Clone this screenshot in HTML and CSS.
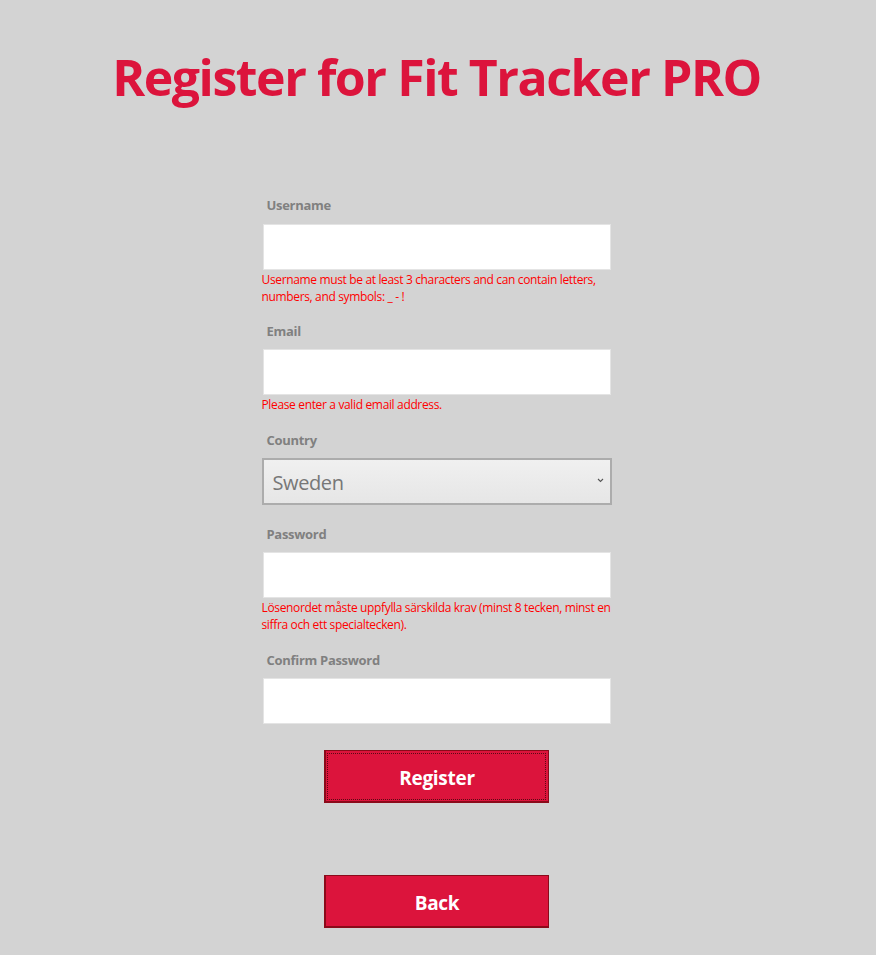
FILE: index.html
```html
<!DOCTYPE html>
<html lang="en">
<head>
<meta charset="utf-8">
<title>Register for Fit Tracker PRO</title>
<link rel="stylesheet" href="styles.css">
</head>
<body>
<h1 class="title">Register for Fit Tracker PRO</h1>
<form class="form">
  <div class="field field-first">
    <label class="label" for="username">Username</label>
    <input class="input" id="username" type="text">
    <div class="error">Username must be at least 3 characters and can contain letters, numbers, and symbols: _ - !</div>
  </div>
  <div class="field">
    <label class="label" for="email">Email</label>
    <input class="input" id="email" type="email">
    <div class="error">Please enter a valid email address.</div>
  </div>
  <div class="field field-select">
    <label class="label" for="country">Country</label>
    <div class="select-wrap">
      <select class="select" id="country">
        <option>Sweden</option>
      </select>
      <svg class="chevron" width="7" height="5" viewBox="0 0 7 5"><path d="M1 1 L3.5 3.5 L6 1" fill="none" stroke="#555" stroke-width="1.1"/></svg>
    </div>
  </div>
  <div class="field">
    <label class="label" for="password">Password</label>
    <input class="input" id="password" type="password">
    <div class="error">Lösenordet måste uppfylla särskilda krav (minst 8 tecken, minst en siffra och ett specialtecken).</div>
  </div>
  <div class="field field-last">
    <label class="label" for="confirm">Confirm Password</label>
    <input class="input" id="confirm" type="password">
  </div>
  <div class="actions">
    <button type="button" class="btn btn-focus">Register</button>
    <button type="button" class="btn btn-back">Back</button>
  </div>
</form>
</body>
</html>
```
FILE: styles.css
```css
html, body {
  margin: 0;
  padding: 0;
}
body {
  background: #d3d3d3;
  font-family: "Open Sans", "Noto Sans", "Liberation Sans", sans-serif;
  padding-right: 3px;
  min-height: 955px;
}
.title {
  margin: 47px 0 0 0;
  text-align: center;
  color: #dc143c;
  font-size: 50px;
  line-height: 60px;
  font-weight: 700;
  letter-spacing: -1.45px;
}
.form {
  width: 350px;
  margin: 89px auto 0 auto;
}
.field {
  margin-bottom: 18px;
}
.field-first .label {
  margin-bottom: 10px;
}
.field-first {
  margin-bottom: 17px;
}
.field-select {
  margin-bottom: 20px;
}
.field-last {
  margin-bottom: 26px;
}
.label {
  display: block;
  font-size: 13px;
  line-height: 18px;
  font-weight: 700;
  color: #808080;
  padding-left: 5px;
  margin-bottom: 9px;
  letter-spacing: -0.3px;
}
.input {
  display: block;
  box-sizing: border-box;
  width: 348px;
  height: 46px;
  margin: 0 1px;
  border: 1px solid #e4e4e4;
  background: #fff;
  outline: none;
  padding: 0 8px;
}
.error {
  margin-top: 1px;
  font-size: 12px;
  line-height: 17px;
  color: #ff0000;
  letter-spacing: -0.35px;
}
.select-wrap {
  position: relative;
}
.select {
  display: block;
  box-sizing: border-box;
  width: 350px;
  height: 47px;
  appearance: none;
  -webkit-appearance: none;
  border: 2px solid #acacac;
  border-radius: 0;
  background: linear-gradient(#f0f0f0, #e6e6e6);
  color: #777;
  font-family: "Open Sans", "Noto Sans", sans-serif;
  font-size: 20px;
  padding: 2px 9px 0 9px;
  outline: none;
  letter-spacing: -0.4px;
}
.chevron {
  position: absolute;
  right: 8px;
  top: 20px;
  pointer-events: none;
}
.actions {
  display: flex;
  flex-direction: column;
  align-items: center;
  gap: 72px;
}
.btn {
  box-sizing: border-box;
  width: 225px;
  height: 53px;
  background: #dc143c;
  color: #fff;
  font-family: "Open Sans", "Noto Sans", sans-serif;
  font-size: 19px;
  font-weight: 700;
  border: 1px solid #8b0a1a;
  border-left-width: 2px;
  border-bottom-width: 2px;
  padding: 4px 0 0 0;
  letter-spacing: -0.3px;
}
.btn-focus {
  outline: 1px dotted #5a0a14;
  outline-offset: -4px;
}
```
